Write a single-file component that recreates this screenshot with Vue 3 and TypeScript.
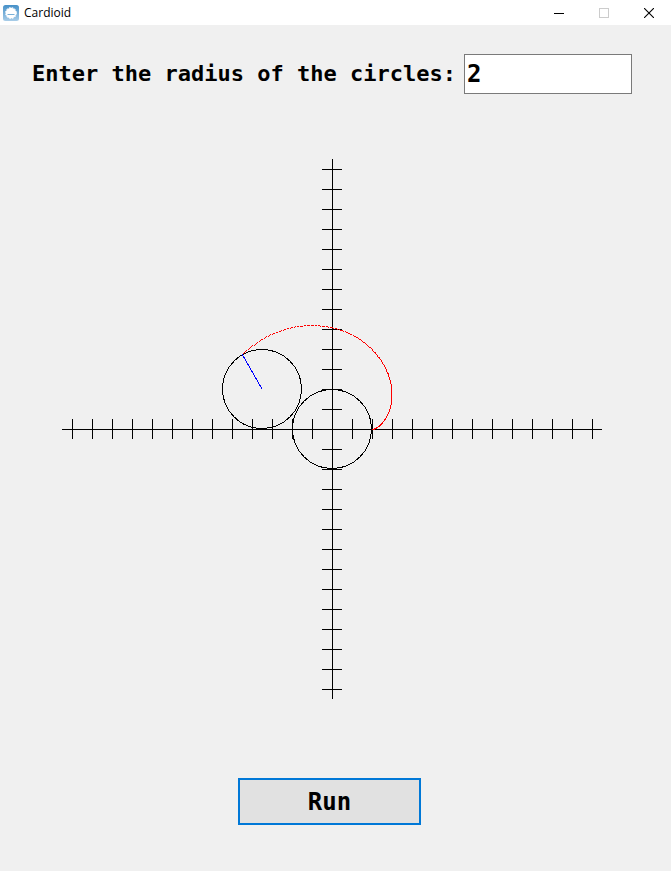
<script setup lang="ts">
import { computed, ref } from 'vue'

const UNIT = 20
const HALF = 270
const STEP = 0.01

const radiusText = ref('2')
const angle = ref((150 * Math.PI) / 180)

const radius = computed(() => (Number(radiusText.value) || 0) * UNIT)
const outline = computed(() => Math.max(radius.value - 0.5, 0))
const ticks = Array.from({ length: 27 }, (_, i) => 10 + i * UNIT).filter((p) => p !== HALF)

const roller = computed(() => ({
  x: Math.floor(HALF + 2 * radius.value * Math.cos(angle.value)),
  y: Math.round(HALF - 2 * radius.value * Math.sin(angle.value)),
}))

function pointAt(t: number) {
  const r = radius.value
  return {
    x: Math.floor(HALF + 2 * r * Math.cos(t) - r * Math.cos(2 * t)),
    y: Math.round(HALF - 2 * r * Math.sin(t) + r * Math.sin(2 * t)),
  }
}

const trace = computed(() => {
  let d = ''
  for (let t = 0; t <= angle.value; t += STEP) {
    const p = pointAt(t)
    d += `M${p.x} ${p.y}h1v1h-1z`
  }
  return d
})
const tip = computed(() => pointAt(angle.value))

function run() {
  angle.value = (150 * Math.PI) / 180
}
</script>

<template>
  <div class="window">
    <header class="titlebar">
      <svg class="app-icon" width="16" height="16" viewBox="0 0 16 16" aria-hidden="true">
        <defs>
          <linearGradient id="sky" x1="0" y1="0" x2="0" y2="1">
            <stop offset="0" stop-color="#4590c8" />
            <stop offset="1" stop-color="#a9cde8" />
          </linearGradient>
        </defs>
        <rect width="16" height="16" rx="2.5" fill="url(#sky)" />
        <circle cx="8" cy="8" r="5.3" fill="#fff" />
        <circle cx="8" cy="8" r="5.5" fill="none" stroke="#fff" stroke-width="1" stroke-dasharray="1.5 1.4" />
        <path d="M4.5 9.5h7" stroke="#79b0d8" stroke-width="1" />
      </svg>
      <h1 class="title">Cardioid</h1>
      <div class="controls">
        <button type="button" aria-label="Minimize">
          <svg width="10" height="10" viewBox="0 0 10 10"><path d="M0 5.5h10" stroke="#000" /></svg>
        </button>
        <button type="button" aria-label="Maximize" disabled>
          <svg width="10" height="10" viewBox="0 0 10 10"><rect x=".5" y=".5" width="9" height="9" fill="none" stroke="#ccc" /></svg>
        </button>
        <button type="button" aria-label="Close">
          <svg width="10" height="10" viewBox="0 0 10 10"><path d="M0 0L10 10M10 0L0 10" stroke="#000" stroke-width="1.1" /></svg>
        </button>
      </div>
    </header>

    <form class="content" @submit.prevent="run">
      <div class="field">
        <label for="radius">Enter the radius of the circles:</label>
        <input id="radius" v-model="radiusText" type="text" />
      </div>

      <svg class="plot" width="540" height="540" viewBox="0 0 540 540" shape-rendering="crispEdges">
        <g stroke="#000" fill="none">
          <path d="M0 270.5H540M270.5 0V540" />
          <path v-for="p in ticks" :key="p" :d="`M${p + 0.5} 260v20M260 ${p + 0.5}h20`" />
          <circle :cx="HALF" :cy="HALF" :r="outline" />
          <circle :cx="roller.x" :cy="roller.y" :r="outline" />
        </g>
        <path :d="`M${roller.x} ${roller.y}L${tip.x} ${tip.y}`" stroke="#00f" />
        <path :d="trace" fill="#f00" />
      </svg>

      <button class="run" type="submit">Run</button>
    </form>
  </div>
</template>

<style>
body {
  margin: 0;
  background: #f0f0f0;
}
</style>

<style scoped>
.window {
  min-height: 100vh;
  background: #f0f0f0;
  color: #000;
}

.titlebar {
  display: flex;
  align-items: center;
  height: 25px;
  padding-left: 3px;
  background: #fff;
}

.app-icon {
  margin-right: 5px;
}

.title {
  margin: 0;
  font: 400 12px/24px "Open Sans", "Noto Sans", sans-serif;
}

.controls {
  display: flex;
  height: 24px;
  margin-left: auto;
}

.controls button {
  display: flex;
  align-items: center;
  justify-content: center;
  width: 45px;
  padding: 0;
  border: 0;
  background: none;
}

.content {
  display: flex;
  flex-direction: column;
  align-items: center;
  padding: 29px 23px 46px 16px;
  font-family: "DejaVu Sans Mono", monospace;
  font-weight: 700;
}

.field {
  display: flex;
  align-items: center;
  gap: 8px;
}

.field label {
  font-size: 22px;
  line-height: 40px;
  white-space: nowrap;
}

.field input {
  box-sizing: border-box;
  width: 168px;
  height: 40px;
  padding: 0 2px;
  border: 1px solid #7a7a7a;
  border-radius: 0;
  outline: 0;
  background: #fff;
  font: inherit;
  font-size: 24px;
  color: #000;
}

.plot {
  display: block;
  margin: 65px 0 79px;
}

.run {
  box-sizing: border-box;
  width: 183px;
  height: 47px;
  margin-right: 5px;
  padding: 0;
  border: 2px solid #0078d7;
  border-radius: 0;
  background: #e1e1e1;
  font: inherit;
  font-size: 24px;
  color: #000;
}
</style>
